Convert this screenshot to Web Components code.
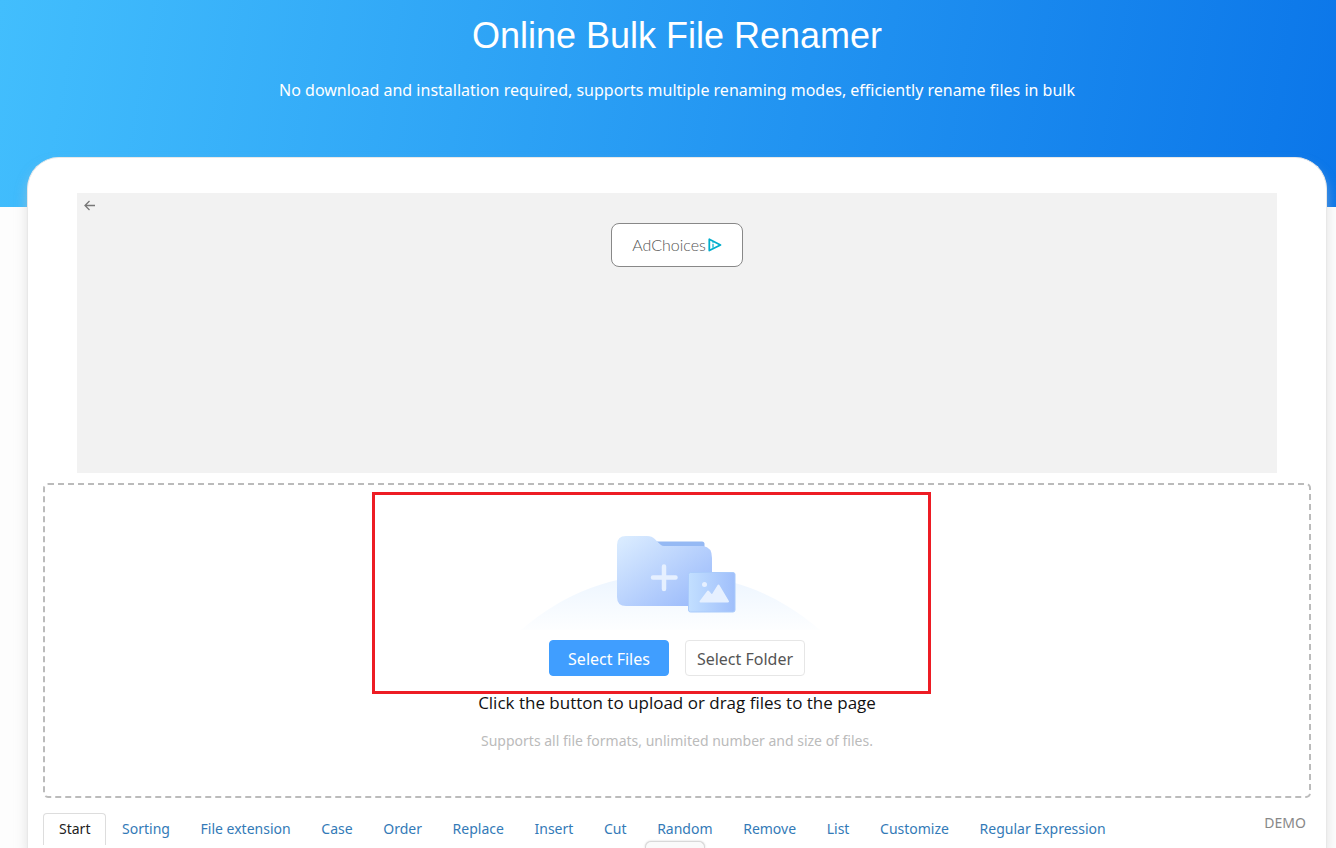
<!DOCTYPE html>
<html lang="en">
<head>
<meta charset="utf-8">
<title>Online Bulk File Renamer</title>
<style>
  html, body { margin: 0; }
  body {
    background: #fdfdfd;
    font-family: "Noto Sans", "Open Sans", sans-serif;
    color: #111;
  }
</style>
</head>
<body>
<renamer-page>
  <page-hero slot="hero">
    <span slot="title">Online Bulk File Renamer</span>
    <span slot="lead">No download and installation required, supports multiple renaming modes, efficiently rename files in bulk</span>
  </page-hero>
  <ad-banner></ad-banner>
  <drop-zone></drop-zone>
  <mode-tabs></mode-tabs>
</renamer-page>
<drawer-handle></drawer-handle>

<script>
class BaseElement extends HTMLElement {
  constructor() {
    super();
    this.attachShadow({ mode: "open" }).innerHTML = this.constructor.markup;
  }
}

class RenamerPage extends BaseElement {
  static markup = `
    <style>
      :host { display: flex; flex-direction: column; height: 100vh; overflow: hidden; }
      main {
        flex: 1 0 auto;
        box-sizing: border-box;
        margin: -50px 9px 0 27px;
        padding: 35px 15px 0;
        border: 1px solid #e8e8e8;
        border-bottom: 0;
        background: #fff;
        border-radius: 32px 32px 0 0;
        box-shadow: 0 8px 12px rgba(200, 200, 200, .5);
      }
    </style>
    <slot name="hero"></slot>
    <main><slot></slot></main>`;
}

class PageHero extends BaseElement {
  static markup = `
    <style>
      :host {
        display: block;
        box-sizing: border-box;
        height: 207px;
        flex: none;
        padding: 16px 0 0 18px;
        text-align: center;
        color: #fff;
        background: linear-gradient(100deg, #42befd, #0b76e9);
      }
      h1 { margin: 0; font: 400 36px/40px "Liberation Sans", Arial, sans-serif; }
      p { margin: 22px 0 0; font-size: 16px; line-height: 24px; }
    </style>
    <h1><slot name="title"></slot></h1>
    <p><slot name="lead"></slot></p>`;
}

class AdBanner extends BaseElement {
  static markup = `
    <style>
      :host {
        display: grid;
        grid-template-columns: 1fr auto 1fr;
        align-items: start;
        box-sizing: border-box;
        height: 280px;
        margin: 0 34px 10px;
        background: #f2f2f2;
      }
      button { border: 0; padding: 0; background: none; margin: 6px; width: 13px; height: 13px; }
      svg { display: block; }
      a {
        display: flex;
        align-items: center;
        justify-content: center;
        gap: 2px;
        box-sizing: border-box;
        width: 132px;
        height: 44px;
        margin-top: 30px;
        border: 1px solid #888;
        border-radius: 8px;
        background: #fff;
        color: #555;
        font: 300 16px/20px Lato, sans-serif;
        text-decoration: none;
      }
    </style>
    <button type="button" aria-label="Back">
      <svg width="13" height="13" viewBox="0 0 13 13" fill="none" stroke="#777" stroke-width="1.3"><path d="M12 6.500H2M6.500 2 2 6.500l4.500 4.500"/></svg>
    </button>
    <a href="#">AdChoices<svg width="14" height="14" viewBox="0 0 14 14" fill="none" stroke="#00aecd" stroke-linejoin="round"><path d="M1.300 1.300V12.500L12.500 7Z" stroke-width="1.800"/><path d="M5 5.800V9.800M5 3.800V4.800" stroke-width="1.200"/></svg></a>`;
}

class FolderArt extends BaseElement {
  static markup = `
    <style>:host { display: block; } svg { display: block; }</style>
    <svg width="320" height="100" viewBox="0 0 320 100" aria-hidden="true">
      <defs>
        <linearGradient id="hill" x1="0" y1="0" x2="0" y2="1"><stop stop-color="#ecf5ff"/><stop offset="1" stop-color="#fdfeff"/></linearGradient>
        <linearGradient id="front" x1="0" y1="0" x2="1" y2="1"><stop offset=".05" stop-color="#d9ebff"/><stop offset=".9" stop-color="#9dbcfb"/></linearGradient>
        <linearGradient id="photo"><stop stop-color="#c2dfff"/><stop offset="1" stop-color="#a0bffb"/></linearGradient>
      </defs>
      <path d="M4 100A226 226 0 0 1 303 100Z" fill="url(#hill)"/>
      <path d="M138 11.500H185Q187.500 11.500 187.500 14V22H138Z" fill="#95b9f4"/>
      <path d="M109 6H130C137 6 139 11 144 15Q145 16 147 16H186Q195 17 195 28V67Q195 76 186 76H109Q100 76 100 67V15Q100 6 109 6Z" fill="url(#front)"/>
      <path d="M147 36.500V59M136 47.500H158.500" stroke="#e6f0ff" stroke-width="4.500" stroke-linecap="round"/>
      <rect x="171.500" y="42.500" width="46.500" height="39.500" rx="2" fill="url(#photo)" stroke="#aacbfb"/>
      <circle cx="187.500" cy="54.500" r="2.500" fill="#e6f0ff"/>
      <path d="M183.500 71.500 191 61.500 195 66 201.500 55.500 211 71.500Z" fill="#e6f0ff" stroke="#e6f0ff" stroke-width="2" stroke-linejoin="round"/>
    </svg>`;
}

class DropZone extends BaseElement {
  static markup = `
    <style>
      :host {
        position: relative;
        display: flex;
        flex-direction: column;
        align-items: center;
        box-sizing: border-box;
        height: 315px;
        padding-top: 45px;
        border: 2px dashed #bbb;
        border-radius: 5px;
      }
      .actions { display: flex; gap: 16px; margin-top: 10px; }
      button {
        box-sizing: border-box;
        width: 120px;
        height: 36px;
        padding: 1px 0 0;
        border: 1px solid #e6e6e6;
        border-radius: 4px;
        background: #fff;
        color: #555;
        font: inherit;
        font-size: 16px;
      }
      button.primary { background: #409eff; border-color: #409eff; color: #fff; }
      p { margin: 0; }
      .hint { margin-top: 15px; font-family: "Open Sans", sans-serif; font-size: 17px; line-height: 24px; }
      .note { margin-top: 16px; font-size: 14px; line-height: 20px; color: #bbb; }
      .focus {
        position: absolute;
        box-sizing: border-box;
        top: 7px;
        left: calc(50% - 305px);
        width: 559px;
        height: 202px;
        border: 3px solid #ed1c24;
        pointer-events: none;
      }
    </style>
    <folder-art></folder-art>
    <div class="actions">
      <button type="button" class="primary">Select Files</button>
      <button type="button">Select Folder</button>
    </div>
    <p class="hint">Click the button to upload or drag files to the page</p>
    <p class="note">Supports all file formats, unlimited number and size of files.</p>
    <div class="focus"></div>`;
}

class ModeTabs extends BaseElement {
  static markup = `
    <style>
      :host { display: flex; justify-content: space-between; margin-top: 15px; font-size: 14px; line-height: 20px; }
      nav { display: flex; justify-content: space-between; flex: 0 0 85%; }
      a { padding: 6px 15px; color: #337ab7; text-decoration: none; white-space: nowrap; }
      a.active { padding: 5px 15px 6px; border: 1px solid #ddd; border-bottom: 0; border-radius: 4px 4px 0 0; color: #222; }
      a.demo { padding: 0 5px; color: #888; }
    </style>
    <nav aria-label="Rename modes">
      <a href="#" class="active">Start</a><a href="#">Sorting</a><a href="#">File extension</a><a href="#">Case</a><a href="#">Order</a><a href="#">Replace</a><a href="#">Insert</a><a href="#">Cut</a><a href="#">Random</a><a href="#">Remove</a><a href="#">List</a><a href="#">Customize</a><a href="#">Regular Expression</a>
    </nav>
    <a href="#" class="demo">DEMO</a>`;
}

class DrawerHandle extends BaseElement {
  static markup = `
    <style>
      :host {
        position: fixed;
        bottom: 0;
        left: calc(50% - 23px);
        box-sizing: border-box;
        width: 60px;
        height: 7px;
        border: 1px solid #d8d8d8;
        border-bottom: 0;
        border-radius: 6px 6px 0 0;
        background: #fafafa;
        box-shadow: 0 0 2px #ccc;
      }
    </style>`;
}

customElements.define("folder-art", FolderArt);
customElements.define("page-hero", PageHero);
customElements.define("ad-banner", AdBanner);
customElements.define("drop-zone", DropZone);
customElements.define("mode-tabs", ModeTabs);
customElements.define("renamer-page", RenamerPage);
customElements.define("drawer-handle", DrawerHandle);
</script>
</body>
</html>
